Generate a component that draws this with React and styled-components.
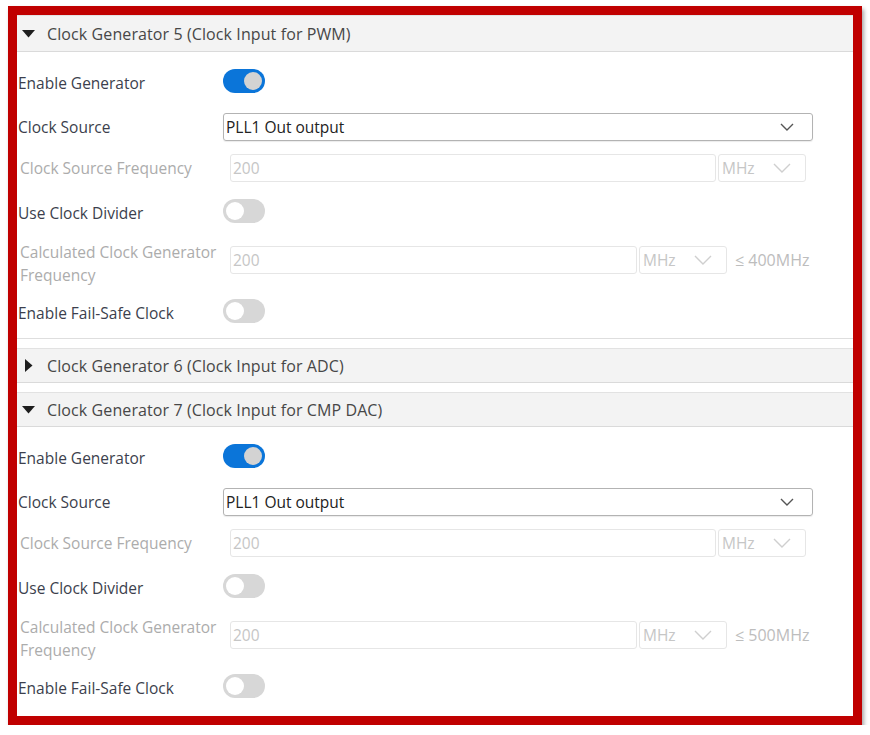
import React from "react";
import styled, { createGlobalStyle } from "styled-components";

const GlobalStyle = createGlobalStyle`
  html, body { margin: 0; padding: 0; background: #ffffff; }
  body { font-family: "Open Sans", "Noto Sans", sans-serif; }
  * { box-sizing: border-box; }
`;

const Frame = styled.div`
  margin: 6px 0 0 8px;
  width: 854px;
  height: 719px;
  border: 9px solid #c00000;
  box-shadow: 2px 3px 4px rgba(0, 0, 0, 0.35);
  background: #ffffff;
  overflow: hidden;
`;

const Section = styled.section`
  margin-top: ${(p) => (p.$first ? "0" : "9px")};
`;

const SectionHeader = styled.div`
  display: flex;
  align-items: center;
  height: ${(p) => (p.$first ? "37px" : "35px")};
  background: #f3f3f3;
  border-top: 1px solid #e2e2e2;
  border-bottom: 1px solid #dadada;
  color: #474747;
  font-size: 16px;
`;

const CaretBox = styled.span`
  width: 23px;
  display: flex;
  align-items: center;
  justify-content: center;
  margin-right: 7px;
`;

const Title = styled.span`
  letter-spacing: 0.1px;
`;

const Body = styled.div`
  padding: 11px 0 3px 1px;
  border-bottom: ${(p) => (p.$last ? "none" : "1px solid #dedede")};
  display: flex;
  flex-direction: column;
  gap: 4px;
`;

const Row = styled.div`
  display: grid;
  grid-template-columns: 205px 1fr;
  align-items: center;
  height: ${(p) => p.$h}px;
`;

const Label = styled.div`
  font-size: 15.5px;
  line-height: 23px;
  color: ${(p) => (p.$disabled ? "#acacac" : "#3c3f4d")};
  padding-left: ${(p) => (p.$disabled ? "2px" : "0")};
`;

const Toggle = styled.div`
  width: 42px;
  height: 24px;
  margin-bottom: 5px;
  border-radius: 12px;
  background: ${(p) => (p.$on ? "#0b75d9" : "#d7d7d7")};
  display: flex;
  align-items: center;
  justify-content: ${(p) => (p.$on ? "flex-end" : "flex-start")};
  padding: 0 3px;
`;

const Knob = styled.div`
  width: 18px;
  height: 18px;
  border-radius: 50%;
  background: ${(p) => (p.$on ? "#d3d3d3" : "#ffffff")};
`;

const Select = styled.div`
  width: 590px;
  height: 28px;
  border: 1px solid #b3b3b3;
  border-radius: 3px;
  display: flex;
  align-items: center;
  justify-content: space-between;
  padding: 0 18px 0 2px;
  font-size: 15.5px;
  color: #222;
  box-shadow: 0 1px 1px rgba(0, 0, 0, 0.08);
`;

const FieldGroup = styled.div`
  display: flex;
  align-items: center;
  margin-left: 7px;
  margin-bottom: ${(p) => p.$lift || 0}px;
  gap: 2px;
`;

const DisabledInput = styled.div`
  width: ${(p) => p.$w}px;
  height: 28px;
  border: 1px solid #e6e6e6;
  border-radius: 3px;
  display: flex;
  align-items: center;
  padding-left: 2px;
  font-size: 15.5px;
  color: #c6c6c6;
`;

const UnitSelect = styled.div`
  width: 88px;
  height: 28px;
  border: 1px solid #e6e6e6;
  border-radius: 3px;
  display: flex;
  align-items: center;
  justify-content: space-between;
  padding: 0 14px 0 3px;
  font-size: 15.5px;
  color: #c6c6c6;
`;

const Limit = styled.span`
  margin-left: 6px;
  font-size: 16px;
  color: #bdbdbd;
`;

const Caret = ({ open }) =>
  open ? (
    <svg width="13" height="8" viewBox="0 0 13 8">
      <path d="M0 0 L13 0 L6.5 7.5 Z" fill="#1e1e1e" />
    </svg>
  ) : (
    <svg width="8" height="13" viewBox="0 0 8 13">
      <path d="M0 0 L7.5 6.5 L0 13 Z" fill="#1e1e1e" />
    </svg>
  );

const Chevron = ({ w = 13, h = 7, color = "#555", sw = 1.3 }) => (
  <svg width={w} height={h + 2} viewBox={`0 0 ${w} ${h + 2}`}>
    <path
      d={`M1 1 L${w / 2} ${h} L${w - 1} 1`}
      fill="none"
      stroke={color}
      strokeWidth={sw}
    />
  </svg>
);

const Switch = ({ on }) => (
  <Toggle $on={on}>
    <Knob $on={on} />
  </Toggle>
);

const Unit = () => (
  <UnitSelect>
    <span>MHz</span>
    <Chevron w={18} h={9} color="#cfcfcf" sw={1.4} />
  </UnitSelect>
);

const GeneratorBody = ({ limit, last }) => (
  <Body $last={last}>
    <Row $h={40}>
      <Label>Enable Generator</Label>
      <Switch on />
    </Row>
    <Row $h={40}>
      <Label>Clock Source</Label>
      <Select>
        <span>PLL1 Out output</span>
        <Chevron w={14} h={7} color="#555" sw={1.4} />
      </Select>
    </Row>
    <Row $h={34}>
      <Label $disabled>Clock Source Frequency</Label>
      <FieldGroup>
        <DisabledInput $w={486}>200</DisabledInput>
        <Unit />
      </FieldGroup>
    </Row>
    <Row $h={48}>
      <Label>Use Clock Divider</Label>
      <Switch />
    </Row>
    <Row $h={46}>
      <Label $disabled>
        Calculated Clock Generator
        <br />
        Frequency
      </Label>
      <FieldGroup $lift={8}>
        <DisabledInput $w={407}>200</DisabledInput>
        <Unit />
        <Limit>≤ {limit}</Limit>
      </FieldGroup>
    </Row>
    <Row $h={44}>
      <Label>Enable Fail-Safe Clock</Label>
      <Switch />
    </Row>
  </Body>
);

export default function App() {
  return (
    <>
      <GlobalStyle />
      <Frame>
        <Section $first>
          <SectionHeader $first>
            <CaretBox>
              <Caret open />
            </CaretBox>
            <Title>Clock Generator 5 (Clock Input for PWM)</Title>
          </SectionHeader>
          <GeneratorBody limit="400MHz" />
        </Section>
        <Section>
          <SectionHeader>
            <CaretBox>
              <Caret />
            </CaretBox>
            <Title>Clock Generator 6 (Clock Input for ADC)</Title>
          </SectionHeader>
        </Section>
        <Section>
          <SectionHeader>
            <CaretBox>
              <Caret open />
            </CaretBox>
            <Title>Clock Generator 7 (Clock Input for CMP DAC)</Title>
          </SectionHeader>
          <GeneratorBody limit="500MHz" last />
        </Section>
      </Frame>
    </>
  );
}
